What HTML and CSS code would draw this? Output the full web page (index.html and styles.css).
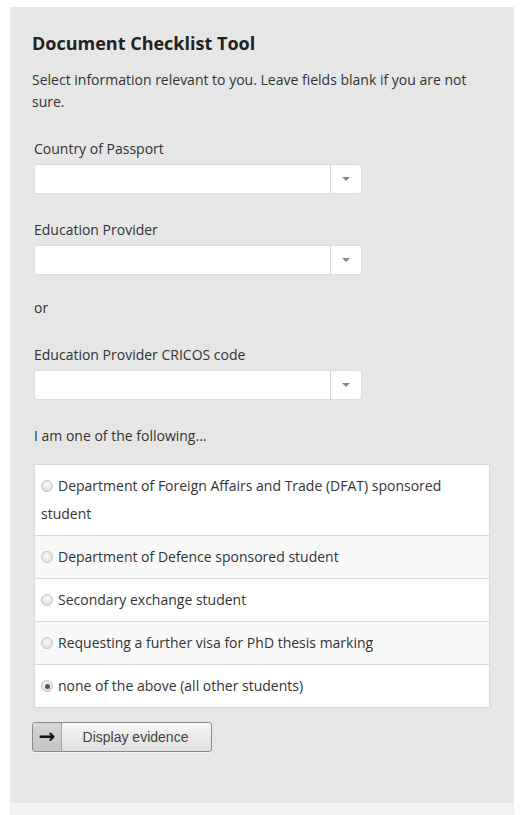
FILE: index.html
```html
<!DOCTYPE html>
<html lang="en">
<head>
<meta charset="utf-8">
<title>Document Checklist Tool</title>
<link rel="stylesheet" href="styles.css">
</head>
<body>
<div class="panel">
  <div class="panel-body">
    <h2 class="title">Document Checklist Tool</h2>
    <p class="intro">Select information relevant to you. Leave fields blank if you are not sure.</p>
    <form class="form">
      <div class="field">
        <label class="label">Country of Passport</label>
        <div class="select"><span class="select-value"></span><span class="select-arrow"><span class="caret"></span></span></div>
      </div>
      <div class="field">
        <label class="label">Education Provider</label>
        <div class="select"><span class="select-value"></span><span class="select-arrow"><span class="caret"></span></span></div>
      </div>
      <p class="or">or</p>
      <div class="field">
        <label class="label">Education Provider CRICOS code</label>
        <div class="select"><span class="select-value"></span><span class="select-arrow"><span class="caret"></span></span></div>
      </div>
      <p class="lead">I am one of the following...</p>
      <ul class="options">
        <li class="option"><label><span class="radio"></span>Department of Foreign Affairs and Trade (DFAT) sponsored student</label></li>
        <li class="option alt"><label><span class="radio"></span>Department of Defence sponsored student</label></li>
        <li class="option"><label><span class="radio"></span>Secondary exchange student</label></li>
        <li class="option alt"><label><span class="radio"></span>Requesting a further visa for PhD thesis marking</label></li>
        <li class="option"><label><span class="radio checked"></span>none of the above (all other students)</label></li>
      </ul>
      <button type="button" class="btn"><span class="btn-icon">&#8594;</span><span class="btn-text">Display evidence</span></button>
    </form>
  </div>
  <div class="panel-footer"></div>
</div>
</body>
</html>
```

FILE: styles.css
```css
html, body {
  margin: 0;
  padding: 0;
  background: #ffffff;
}
body {
  font-family: "Open Sans", "Liberation Sans", sans-serif;
  font-size: 14px;
  color: #333333;
}
.panel {
  margin: 7px 0 0 10px;
  width: 504px;
  border-left: 1px solid #ececec;
  border-right: 1px solid #ececec;
  box-sizing: border-box;
}
.panel-body {
  background: #e6e6e6;
  padding: 24px 23px 51px 21px;
  height: 796px;
  box-sizing: border-box;
}
.panel-footer {
  background: #f3f3f3;
  height: 20px;
}
.title {
  margin: 0;
  font-size: 18px;
  font-weight: 700;
  line-height: 24px;
  color: #222222;
}
.intro {
  margin: 14px 0 0 0;
  line-height: 21.5px;
  padding-right: 0;
}
.form {
  margin: 26px 0 0 2px;
}
.field {
  margin-bottom: 25px;
}
.label {
  display: block;
  line-height: 21px;
  margin-bottom: 5px;
}
.select {
  display: flex;
  width: 328px;
  height: 30px;
  box-sizing: border-box;
  background: #ffffff;
  border: 1px solid #dcdcdc;
  border-radius: 3px;
}
.select-value {
  flex: 1;
}
.select-arrow {
  width: 30px;
  border-left: 1px solid #d6d6d6;
  display: flex;
  align-items: center;
  justify-content: center;
}
.caret {
  width: 0;
  height: 0;
  border-left: 4px solid transparent;
  border-right: 4px solid transparent;
  border-top: 4px solid #888888;
}
.or {
  margin: -3px 0 0 0;
  line-height: 21px;
}
.or + .field {
  margin-top: 26px;
}
.lead {
  margin: 0;
  line-height: 21px;
}
.options {
  list-style: none;
  margin: 18px 0 0 0;
  padding: 0;
  width: 456px;
  border: 1px solid #d9d9d9;
  box-sizing: border-box;
  background: #ffffff;
}
.option {
  padding: 7px 7px 7px 6px;
  line-height: 28px;
  border-top: 1px solid #d9d9d9;
}
.option:first-child {
  border-top: none;
}
.option.alt {
  background: #f9f9f9;
}
.option label {
  display: block;
}
.radio {
  display: inline-block;
  width: 12px;
  height: 12px;
  border-radius: 50%;
  border: 1px solid #c4c4c4;
  box-sizing: border-box;
  background: radial-gradient(circle at 50% 40%, #fafafa 0%, #e6e6e6 60%, #d4d4d4 100%);
  margin-right: 5px;
  vertical-align: -1px;
  position: relative;
}
.radio.checked::after {
  content: "";
  position: absolute;
  left: 2.5px;
  top: 2.5px;
  width: 5px;
  height: 5px;
  border-radius: 50%;
  background: #555555;
}
.btn {
  display: flex;
  align-items: stretch;
  margin: 14px 0 0 -2px;
  padding: 0;
  width: 180px;
  height: 30px;
  border: 1px solid #8a8a8a;
  border-radius: 3px;
  background: linear-gradient(#f7f7f7, #dedede);
  font-family: "Liberation Sans", Arial, sans-serif;
  font-size: 14px;
  color: #444444;
  overflow: hidden;
  box-shadow: 0 1px 0 #f5f5f5;
}
.btn-icon {
  width: 29px;
  display: flex;
  align-items: center;
  justify-content: center;
  background: linear-gradient(#d6d6d6, #c4c4c4);
  border-right: 1px solid #a8a8a8;
  color: #111111;
  font-size: 20px;
  font-weight: 700;
  font-family: "DejaVu Sans", sans-serif;
  padding-bottom: 2px;
  box-sizing: border-box;
}
.btn-text {
  flex: 1;
  display: flex;
  align-items: center;
  justify-content: center;
  padding-right: 2px;
}
```
